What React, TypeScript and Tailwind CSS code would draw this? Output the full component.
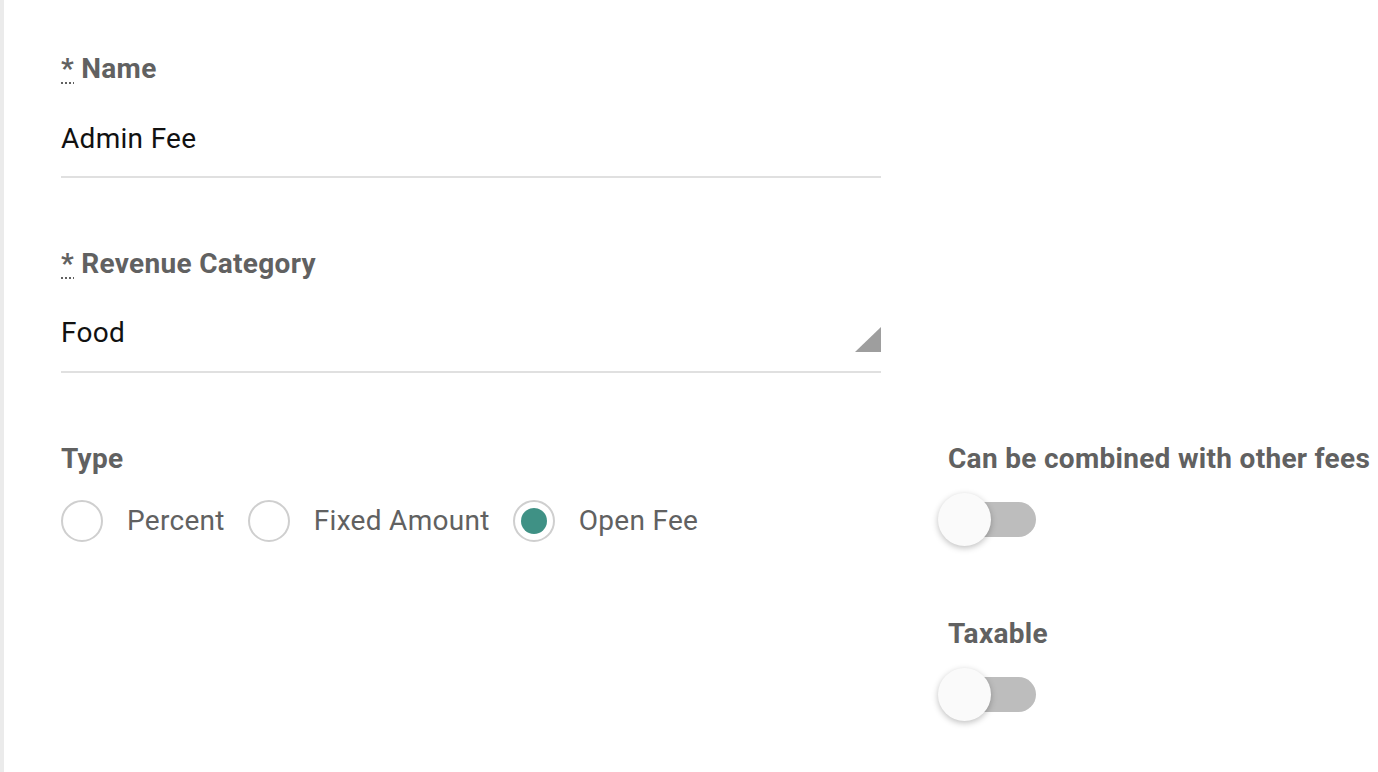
import React from "react";

function Label({ children, required }: { children: React.ReactNode; required?: boolean }) {
  return (
    <div className="h-[32px] text-[28px] leading-[32px] tracking-[0.3px] font-bold text-[#616161] whitespace-nowrap">
      {required && (
        <>
          <abbr title="required" className="underline decoration-dotted decoration-[2px] underline-offset-[4px]">*</abbr>{" "}
        </>
      )}
      {children}
    </div>
  );
}

function Radio({ checked, label }: { checked?: boolean; label: string }) {
  return (
    <div className="flex items-center">
      <div className="w-[42px] h-[42px] rounded-full border-2 border-[#cfcfcf] flex items-center justify-center shrink-0">
        {checked && <div className="w-[26px] h-[26px] rounded-full bg-[#3f9185]" />}
      </div>
      <span className="ml-[24px] text-[28px] leading-[32px] tracking-[0.3px] text-[#616161]">{label}</span>
    </div>
  );
}

function Toggle() {
  return (
    <div className="relative h-[53px] w-[100px] -ml-[10px] flex items-center">
      <div className="ml-[2px] w-[96px] h-[35px] rounded-full bg-[#bdbdbd]" />
      <div className="absolute left-0 top-0 w-[53px] h-[53px] rounded-full bg-[#fafafa] shadow-[0_2px_6px_rgba(0,0,0,0.25)]" />
    </div>
  );
}

export default function App() {
  return (
    <div
      className="w-[1378px] h-[772px] bg-white border-l-4 border-[#ebebeb] overflow-hidden"
      style={{ fontFamily: "Roboto, 'Noto Sans', sans-serif" }}
    >
      <div className="pl-[57px] pt-[53px]">
        <div className="w-[820px]">
          <Label required>Name</Label>
          <div className="mt-[38px] pb-[21px] border-b-2 border-[#e0e0e0] text-[28px] leading-[32px] tracking-[0.3px] text-[#111]">
            Admin Fee
          </div>
        </div>
        <div className="w-[820px] mt-[70px]">
          <Label required>Revenue Category</Label>
          <div className="mt-[37px] pb-[22px] border-b-2 border-[#e0e0e0] text-[28px] leading-[32px] tracking-[0.3px] text-[#111] flex items-end justify-between">
            <span>Food</span>
            <svg width="26" height="25" viewBox="0 0 26 25" className="mb-[-3px]">
              <polygon points="26,0 26,25 0,25" fill="#9e9e9e" />
            </svg>
          </div>
        </div>
        <div className="flex mt-[70px]">
          <div className="w-[820px]">
            <Label>Type</Label>
            <div className="mt-[25px] flex items-center gap-[23px]">
              <Radio label="Percent" />
              <Radio label="Fixed Amount" />
              <Radio checked label="Open Fee" />
            </div>
          </div>
          <div className="ml-[67px]">
            <Label>Can be combined with other fees</Label>
            <div className="mt-[18px]">
              <Toggle />
            </div>
            <div className="mt-[72px]">
              <Label>Taxable</Label>
            </div>
            <div className="mt-[18px]">
              <Toggle />
            </div>
          </div>
        </div>
      </div>
    </div>
  );
}
